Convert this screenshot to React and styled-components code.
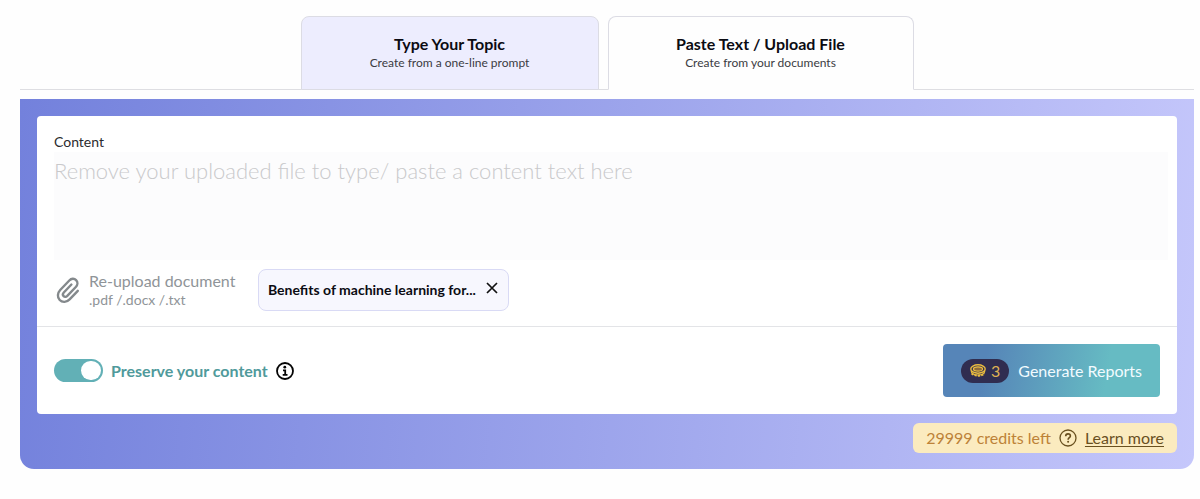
import React, { useState } from "react";
import styled, { createGlobalStyle } from "styled-components";

const App = () => {
  const [tab, setTab] = useState("upload");
  const [preserve, setPreserve] = useState(true);

  return (
    <>
      <GlobalStyle />
      <Page>
        <Tabs role="tablist">
          <Tab
            type="button"
            role="tab"
            $basis="298px"
            $active={tab === "topic"}
            aria-selected={tab === "topic"}
            onClick={() => setTab("topic")}
          >
            <TabTitle>Type Your Topic</TabTitle>
            <TabHint>Create from a one-line prompt</TabHint>
          </Tab>
          <Tab
            type="button"
            role="tab"
            $basis="306px"
            $active={tab === "upload"}
            aria-selected={tab === "upload"}
            onClick={() => setTab("upload")}
          >
            <TabTitle>Paste Text / Upload File</TabTitle>
            <TabHint>Create from your documents</TabHint>
          </Tab>
        </Tabs>

        <Panel>
          <Card>
            <Label htmlFor="content">Content</Label>
            <TextArea
              id="content"
              disabled
              placeholder="Remove your uploaded file to type/ paste a content text here"
            />
            <UploadRow>
              <UploadButton type="button">
                <ClipIcon />
                <span>
                  <UploadTitle>Re-upload document</UploadTitle>
                  <UploadTypes>.pdf /.docx /.txt</UploadTypes>
                </span>
              </UploadButton>
              <FileChip>
                <FileName>Benefits of machine learning for...</FileName>
                <RemoveButton type="button" aria-label="Remove file">
                  <CloseIcon />
                </RemoveButton>
              </FileChip>
            </UploadRow>
            <Footer>
              <ToggleLabel>
                <Toggle
                  type="checkbox"
                  role="switch"
                  checked={preserve}
                  onChange={(e) => setPreserve(e.target.checked)}
                />
                Preserve your content
                <InfoIcon />
              </ToggleLabel>
              <GenerateButton type="button">
                <Cost>
                  <CoinIcon />3
                </Cost>
                Generate Reports
              </GenerateButton>
            </Footer>
          </Card>
          <Credits>
            <span>29999 credits left</span>
            <HelpIcon />
            <LearnMore href="#credits">Learn more</LearnMore>
          </Credits>
        </Panel>
      </Page>
    </>
  );
};

export default App;

const ClipIcon = () => (
  <svg width="24" height="28" viewBox="0 0 24 28" fill="none" stroke="#84898c" strokeWidth="2.4" strokeLinecap="round">
    <path d="M21.8 14.8 13.6 23.4c-2.9 3-7.3 3.3-9.9.6s-2.3-7 .5-10L13.3 4.5c2-2.1 4.9-2.3 6.8-.4s1.7 4.8-.3 6.9l-8.5 8.9c-1.2 1.2-2.7 1.3-3.7.3s-.9-2.5.2-3.7l7.6-8" />
  </svg>
);

const CloseIcon = () => (
  <svg width="12" height="12" viewBox="0 0 12 12" fill="none" stroke="#111" strokeWidth="1.7">
    <path d="M1 1l10 10M11 1L1 11" />
  </svg>
);

const InfoIcon = () => (
  <svg width="18" height="18" viewBox="0 0 18 18" fill="none" stroke="#050505" strokeWidth="1.8">
    <circle cx="9" cy="9" r="8" />
    <circle cx="8.8" cy="5.2" r="1.4" fill="#050505" stroke="none" />
    <path d="M7 8.3h2.2v4.5M6.7 12.8h4.8" />
  </svg>
);

const CoinIcon = () => (
  <svg width="16" height="13" viewBox="0 0 16 13" fill="none" stroke="#e9bc40">
    <ellipse cx="8" cy="5" rx="7.2" ry="4.2" strokeWidth="1.4" />
    <ellipse cx="8" cy="5" rx="4.6" ry="2.2" strokeWidth="1.2" fill="#8d6b3c" />
    <path d="M1.2 6.8c.3 5.600 13.300 5.600 13.600 0" strokeWidth="1.2" />
    <path d="M1.800 9.400c2.200 3 10.200 3 12.400 0" strokeWidth="2" strokeDasharray="2.200 1.100" />
  </svg>
);

const HelpIcon = () => (
  <svg width="18" height="18" viewBox="0 0 18 18" fill="none" stroke="#69501f" strokeWidth="1.3">
    <circle cx="9" cy="9" r="8" />
    <path d="M6.7 7.2c0-3.2 4.7-3 4.7-.2 0 1.7-2.3 1.8-2.3 3.7" strokeWidth="1.6" />
    <circle cx="9.1" cy="12.8" r="1" fill="#69501f" stroke="none" />
  </svg>
);

const GlobalStyle = createGlobalStyle`
  * {
    box-sizing: border-box;
  }
  body {
    margin: 0;
    background: #fefefe;
    color: #2b2b2e;
    font-family: Lato, "Liberation Sans", sans-serif;
  }
  button,
  textarea {
    font-family: inherit;
  }
  button {
    cursor: pointer;
  }
  svg {
    flex: none;
    display: block;
  }
`;

const Page = styled.main`
  padding: 16px 6px 30px 20px;
`;

const Tabs = styled.div`
  display: flex;
  justify-content: center;
  gap: 9px;
  border-bottom: 1px solid #dedee2;
`;

const Tab = styled.button`
  flex: 0 1 ${(props) => props.$basis};
  height: 74px;
  margin-bottom: -1px;
  padding: 0;
  display: flex;
  flex-direction: column;
  align-items: center;
  justify-content: center;
  border: 1px solid #dcdce4;
  border-bottom-color: ${(props) => (props.$active ? "#fefefe" : "#dcdce4")};
  border-radius: 8px 8px 0 0;
  background: ${(props) => (props.$active ? "#fefefe" : "#ededfe")};
`;

const TabTitle = styled.span`
  font-size: 16px;
  line-height: 20px;
  font-weight: 700;
  color: #0b0b12;
`;

const TabHint = styled.span`
  font-size: 12px;
  line-height: 18px;
  color: #3b3b42;
`;

const Panel = styled.section`
  margin-top: 9px;
  padding: 17px 17px 16px;
  border-radius: 0 0 14px 14px;
  background: linear-gradient(95deg, #7381dc 0%, #c5c7fb 100%);
`;

const Card = styled.div`
  border-radius: 4px;
  background: #fff;
`;

const Label = styled.label`
  display: block;
  padding: 16px 17px 0;
  font-size: 14px;
  line-height: 20px;
`;

const TextArea = styled.textarea`
  display: block;
  width: calc(100% - 26px);
  height: 108px;
  margin-left: 17px;
  padding: 5px 0;
  border: 0;
  resize: none;
  background: #fcfcfd;
  font-size: 22px;
  line-height: 28px;
  font-weight: 300;

  &::placeholder {
    color: #c9c9cb;
    opacity: 1;
  }
`;

const UploadRow = styled.div`
  display: flex;
  align-items: center;
  gap: 18px;
  padding: 9px 17px 15px;
  border-bottom: 1px solid #e3e4e7;
`;

const UploadButton = styled.button`
  display: flex;
  align-items: center;
  gap: 9px;
  min-width: 186px;
  padding: 0 0 0 2px;
  border: 0;
  background: none;
  text-align: left;
  color: #8f9498;
`;

const UploadTitle = styled.span`
  display: block;
  font-size: 16px;
  line-height: 20px;
`;

const UploadTypes = styled.span`
  display: block;
  font-size: 14px;
  line-height: 18px;
`;

const FileChip = styled.div`
  display: flex;
  align-items: center;
  gap: 10px;
  height: 42px;
  padding: 0 10px 0 9px;
  border: 1px solid #d9daf5;
  border-radius: 8px;
  background: #f7f7fe;
`;

const FileName = styled.span`
  font-size: 14px;
  line-height: 20px;
  font-weight: 700;
  color: #0b0b12;
`;

const RemoveButton = styled.button`
  padding: 0 0 4px;
  border: 0;
  background: none;
`;

const Footer = styled.div`
  display: flex;
  align-items: center;
  justify-content: space-between;
  padding: 17px;
`;

const ToggleLabel = styled.label`
  display: flex;
  align-items: center;
  gap: 8px;
  font-size: 16px;
  line-height: 20px;
  font-weight: 700;
  color: #509a9b;
`;

const Toggle = styled.input`
  appearance: none;
  display: flex;
  justify-content: flex-end;
  width: 49px;
  height: 23px;
  margin: 0;
  padding: 2px;
  border-radius: 12px;
  background: #62b0b6;

  &::before {
    content: "";
    width: 20px;
    height: 19px;
    border-radius: 10px;
    background: #fff;
  }

  &:not(:checked) {
    justify-content: flex-start;
    background: #b9bdc1;
  }
`;

const GenerateButton = styled.button`
  display: flex;
  align-items: center;
  gap: 9px;
  height: 53px;
  padding: 0 18px;
  border: 0;
  border-radius: 4px;
  background: linear-gradient(100deg, #5685b8 0%, #5685b8 20%, #66bbc3 75%);
  font-size: 16px;
  color: #f2fbff;
`;

const Cost = styled.span`
  display: flex;
  align-items: center;
  gap: 5px;
  height: 24px;
  padding: 0 9px;
  border-radius: 12px;
  background: #302d50;
  color: #dfb253;
`;

const Credits = styled.div`
  display: flex;
  align-items: center;
  gap: 8px;
  width: fit-content;
  height: 30px;
  margin: 9px 0 0 auto;
  padding: 0 13px;
  border-radius: 6px;
  background: #fbebbf;
  font-size: 16px;
  line-height: 20px;
  color: #bd8238;
`;

const LearnMore = styled.a`
  color: #69501f;
  text-underline-offset: 2px;
`;
